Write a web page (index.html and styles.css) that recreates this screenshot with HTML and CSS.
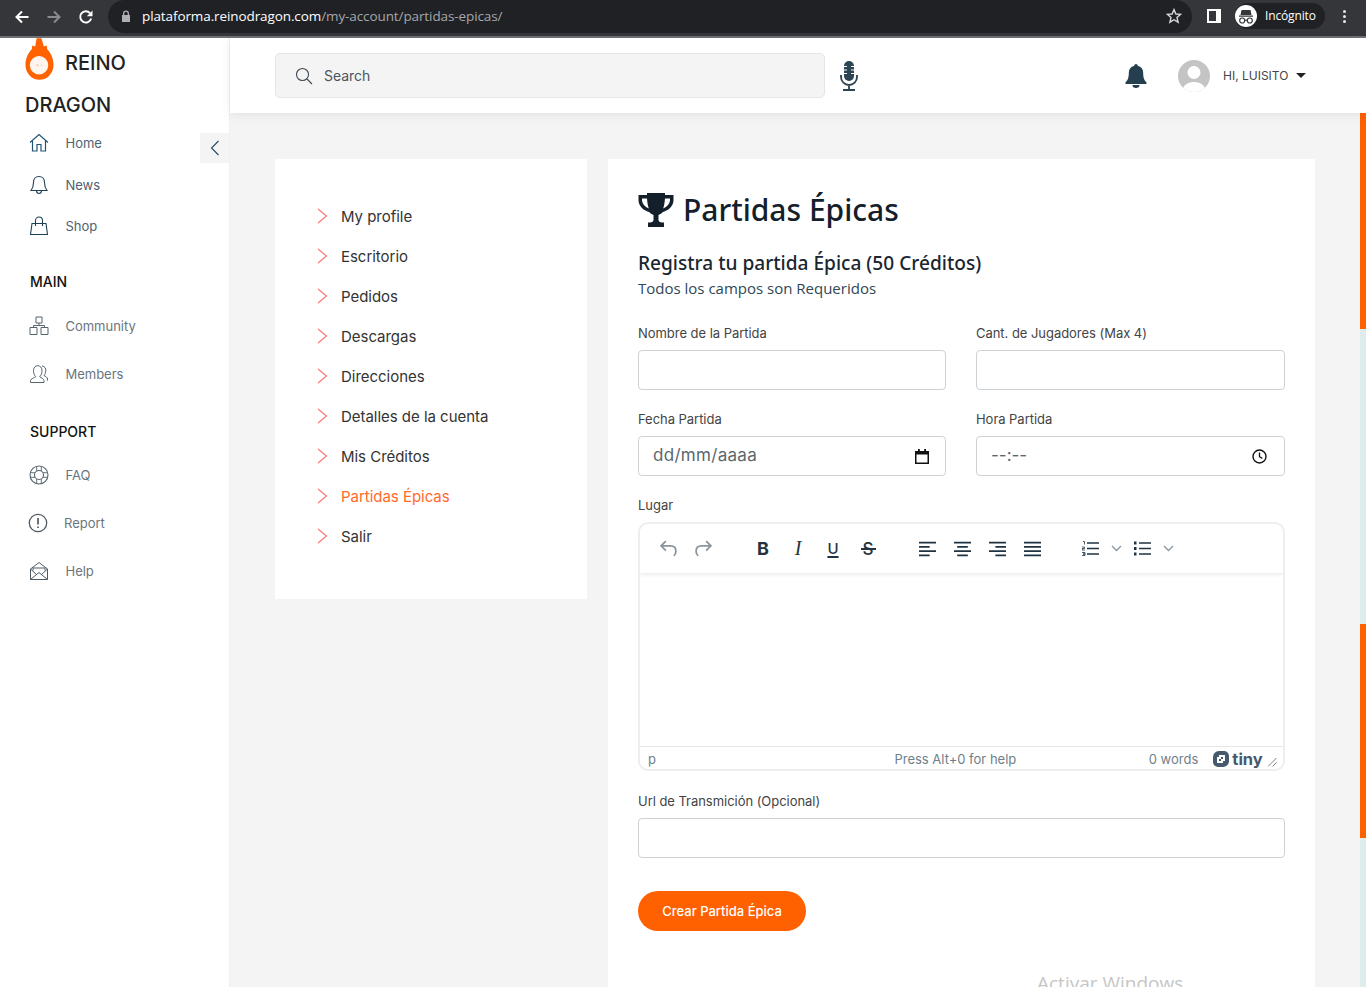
FILE: index.html
```html
<!DOCTYPE html>
<html lang="es">
<head>
    <meta charset="UTF-8">
    <meta name="viewport" content="width=device-width, initial-scale=1.0">
    <title>Partidas Épicas</title>
    <link rel="stylesheet" href="styles.css">
</head>
<body>
    <!-- browser chrome -->
    <div class="browser-bar">
        <div class="nav-buttons">
            <svg class="chrome-icon" viewBox="0 0 16 16"><path d="M14.5 8H2.500M8 2.500 2.500 8 8 13.500" fill="none" stroke="#fff" stroke-width="2"/></svg>
            <svg class="chrome-icon" viewBox="0 0 16 16"><path d="M1.500 8h12M8 2.500 13.500 8 8 13.500" fill="none" stroke="#8a8b8e" stroke-width="2"/></svg>
            <svg class="chrome-icon" viewBox="0 0 16 16"><path d="M13.200 9.500A5.600 5.600 0 1 1 12 4.100" fill="none" stroke="#fff" stroke-width="1.900"/><path d="M14.500 1.500v5.700H8.800z" fill="#fff"/></svg>
        </div>
        <div class="omnibox">
            <svg class="lock-icon" viewBox="0 0 10 12"><path d="M2 5V3.400a3 3 0 0 1 6 0V5h1v7H1V5zm1.300 0h3.400V3.400a1.700 1.700 0 0 0-3.400 0z" fill="#aeb0b4"/></svg>
            <span class="url"><span class="url-host">plataforma.reinodragon.com</span>/my-account/partidas-epicas/</span>
            <svg class="star-icon" viewBox="0 0 16 16"><path d="M8 1.600 9.900 6l4.700.4-3.600 3.100 1.100 4.700L8 11.700l-4.100 2.500L5 9.500 1.400 6.400 6.100 6z" fill="none" stroke="#d6d7d9" stroke-width="1.400"/></svg>
        </div>
        <svg class="panel-icon" viewBox="0 0 14 14"><path d="M0 0h14v14H0zM9 2H2v10h7z" fill="#fff" fill-rule="evenodd"/></svg>
        <div class="incognito">
            <span class="incognito-badge">
                <svg viewBox="0 0 22 22"><path d="M4 10.500h14v1.200H4zM6.500 5h9l1 5h-11z" fill="#35363a"/><circle cx="7.200" cy="15.500" r="2.500" fill="none" stroke="#35363a" stroke-width="1.200"/><circle cx="14.800" cy="15.500" r="2.500" fill="none" stroke="#35363a" stroke-width="1.200"/><path d="M9.700 15.200h2.600" stroke="#35363a" stroke-width="1.200"/></svg>
            </span>
            Incógnito
        </div>
        <div class="kebab"><i></i><i></i><i></i></div>
    </div>

    <div class="shell">
        <aside class="sidebar">
            <div class="logo-row">
                <svg class="flame" viewBox="0 0 30 44">
                    <path d="M12 0h5l2.500 8.500 3-1 .5 4c4 4 6.500 10 6.500 16a14.500 15.500 0 0 1-29 0c0-6 2.500-12 6.500-16l.5-4 3 1z" fill="#ff6200"/>
                    <circle cx="14.500" cy="28" r="9.500" fill="#fff6f0"/>
                    <circle cx="13" cy="28" r="1.100" fill="#ffc2a0"/>
                    <circle cx="17" cy="28" r=".8" fill="#ffc2a0"/>
                </svg>
                <span>REINO</span>
            </div>
            <div class="logo-second">DRAGON</div>

            <ul class="nav-list nav-top">
                <li class="nav-item">
                    <svg class="nav-icon" viewBox="0 0 20 20"><path d="M1 9.500 10 1.500l9 8M3.500 8v10h4.500v-6.500h4V18h4.500V8" fill="none" stroke="#1f5472" stroke-width="1.200"/></svg>
                    Home
                </li>
                <li class="nav-item">
                    <svg class="nav-icon" viewBox="0 0 20 20"><path d="M10 1.500c-3.500 0-5.500 2.500-5.500 6 0 4-.8 5.800-2.500 8h16c-1.700-2.200-2.500-4-2.500-8 0-3.500-2-6-5.500-6zM7.500 15.500c0 4 5 4 5 0" fill="none" stroke="#1f4258" stroke-width="1.100"/></svg>
                    News
                </li>
                <li class="nav-item">
                    <svg class="nav-icon" viewBox="0 0 20 20"><path d="M1.500 18.500 3 7.500h14l1.500 11zM6.500 10V4.500a3.500 3.500 0 0 1 7 0V10" fill="none" stroke="#1f4258" stroke-width="1.100"/></svg>
                    Shop
                </li>
            </ul>

            <div class="nav-title nav-title-main">MAIN</div>
            <ul class="nav-list nav-main">
                <li class="nav-item">
                    <svg class="nav-icon" viewBox="0 0 20 20"><path d="M7 1h6v6H7zM1 11.500h7v7H1zM12 11.500h7v7h-7zM10 7v2.500H4.500v2M10 9.500h5.500v2" fill="none" stroke="#56646e" stroke-width="1"/></svg>
                    Community
                </li>
                <li class="nav-item">
                    <svg class="nav-icon" viewBox="0 0 20 20"><path d="M1.500 18.500v-1.800c0-2 3.800-2.800 5.300-4-1.800-1.800-2.300-3.800-2.300-6 0-3 1.700-5 4.200-5s4.300 2 4.300 5c0 2.200-.5 4.200-2.300 6 1.500 1.200 4.300 2 4.300 4v1.800zM13 2c3 .3 4 2.500 3.800 5-.2 2-.8 3.300-1.800 4.500 1.500 1 3.500 1.700 3.500 3.500v1.500" fill="none" stroke="#56646e" stroke-width="1"/></svg>
                    Members
                </li>
            </ul>

            <div class="nav-title nav-title-support">SUPPORT</div>
            <ul class="nav-list nav-support">
                <li class="nav-item">
                    <svg class="nav-icon" viewBox="0 0 20 20"><circle cx="10" cy="10" r="9" fill="none" stroke="#56646e" stroke-width="1.100"/><circle cx="10" cy="10" r="4.500" fill="none" stroke="#56646e" stroke-width="1.100"/><path d="M7.700 1.300v4.800M12.300 1.300v4.800M7.700 13.900v4.800M12.300 13.900v4.800M1.300 7.700h4.800M1.300 12.300h4.800M13.900 7.700h4.800M13.900 12.300h4.800" fill="none" stroke="#56646e" stroke-width=".9"/></svg>
                    FAQ
                </li>
                <li class="nav-item nav-item-report">
                    <svg class="nav-icon" viewBox="0 0 20 20"><circle cx="10" cy="10" r="8.700" fill="none" stroke="#4f5c66" stroke-width="1.300"/><path d="M10 5v6.500M10 13.500V15" stroke="#4f5c66" stroke-width="1.700"/></svg>
                    Report
                </li>
                <li class="nav-item">
                    <svg class="nav-icon" viewBox="0 0 20 20"><path d="M1.500 8 10 1.500 18.500 8v10.500h-17zM1.500 8l6 5.500M18.500 8l-6 5.500M1.500 18.500 10 11.500l8.500 7M4 9.500V7h12v2.500" fill="none" stroke="#4f5c66" stroke-width="1"/></svg>
                    Help
                </li>
            </ul>

            <button class="collapse-btn" type="button">
                <svg viewBox="0 0 10 16"><path d="M8.500 1 1.500 8l7 7" fill="none" stroke="#234a63" stroke-width="1.100"/></svg>
            </button>
        </aside>

        <div class="main">
            <header class="topbar">
                <div class="search">
                    <svg class="search-icon" viewBox="0 0 18 18"><circle cx="7.500" cy="7.500" r="6" fill="none" stroke="#3f4a55" stroke-width="1.100"/><path d="m12 12 5 5" stroke="#3f4a55" stroke-width="1.100"/></svg>
                    Search
                </div>
                <svg class="mic-icon" viewBox="0 0 18 30"><rect x="4" y="0" width="10" height="20" rx="5" fill="#2c4454"/><path d="M3.500 5.500h3.500M11 5.500h3.500M3.500 9h3.500M11 9h3.500M3.500 12.500h3.500M11 12.500h3.500" stroke="#fff" stroke-width="1.100"/><path d="M1 14v2a8 8 0 0 0 16 0v-2M9 24v4M3 29h12" fill="none" stroke="#2c4454" stroke-width="1.800"/></svg>
                <svg class="bell-icon" viewBox="0 0 22 24"><path d="M11 0c1 0 1.700.7 1.700 1.800 3.600.8 5.500 3.500 5.500 7.200 0 5 1 7 3.300 9.500v1.500H.5v-1.500C2.800 16 3.800 14 3.800 9c0-3.700 1.900-6.400 5.500-7.200C9.300.7 10 0 11 0zM7.500 21h7a3.500 3 0 0 1-7 0z" fill="#263f50"/></svg>
                <div class="user">
                    <span class="avatar">
                        <svg viewBox="0 0 32 32"><circle cx="16" cy="12.500" r="6.500" fill="#fff"/><path d="M4 32c1-8 7-10 12-10s11 2 12 10z" fill="#fff"/></svg>
                    </span>
                    <span>HI, LUISITO</span>
                    <span class="caret"></span>
                </div>
            </header>

            <div class="page-body">
                <div class="content">
                    <ul class="account-menu">
                        <li><svg viewBox="0 0 11 16"><path d="m1 1 8.500 7L1 15" fill="none" stroke="#f77" stroke-width="1.200"/></svg>My profile</li>
                        <li><svg viewBox="0 0 11 16"><path d="m1 1 8.500 7L1 15" fill="none" stroke="#f77" stroke-width="1.200"/></svg>Escritorio</li>
                        <li><svg viewBox="0 0 11 16"><path d="m1 1 8.500 7L1 15" fill="none" stroke="#f77" stroke-width="1.200"/></svg>Pedidos</li>
                        <li><svg viewBox="0 0 11 16"><path d="m1 1 8.500 7L1 15" fill="none" stroke="#f77" stroke-width="1.200"/></svg>Descargas</li>
                        <li><svg viewBox="0 0 11 16"><path d="m1 1 8.500 7L1 15" fill="none" stroke="#f77" stroke-width="1.200"/></svg>Direcciones</li>
                        <li><svg viewBox="0 0 11 16"><path d="m1 1 8.500 7L1 15" fill="none" stroke="#f77" stroke-width="1.200"/></svg>Detalles de la cuenta</li>
                        <li><svg viewBox="0 0 11 16"><path d="m1 1 8.500 7L1 15" fill="none" stroke="#f77" stroke-width="1.200"/></svg>Mis Créditos</li>
                        <li class="active"><svg viewBox="0 0 11 16"><path d="m1 1 8.500 7L1 15" fill="none" stroke="#f77" stroke-width="1.200"/></svg>Partidas Épicas</li>
                        <li><svg viewBox="0 0 11 16"><path d="m1 1 8.500 7L1 15" fill="none" stroke="#f77" stroke-width="1.200"/></svg>Salir</li>
                    </ul>

                    <section class="card">
                        <h1 class="page-title">
                            <svg viewBox="0 0 36 34"><path d="M9 0h18v2h8.500v5c0 6-5 10.500-10.500 12-1.500 1.500-3.500 2.500-4.500 3v5c0 1.500 1.500 2.500 3.500 2.500h2V34H10v-4.500h2c2 0 3.500-1 3.500-2.500v-5c-1-.5-3-1.500-4.500-3C5.500 17.500.5 13 .5 7V2H9zM4 5.500V7c0 3.500 3 7 6.800 8.500C9.800 12.500 9.200 9 9 5.500zm28 0h-5c-.2 3.500-.8 7-1.800 10C29 14 32 10.500 32 7z" fill="#13202b" fill-rule="evenodd"/></svg>
                            Partidas Épicas
                        </h1>
                        <h2 class="subtitle">Registra tu partida Épica (50 Créditos)</h2>
                        <p class="required">Todos los campos son Requeridos</p>

                        <form class="match-form">
                            <div class="form-row">
                                <div class="form-group">
                                    <label for="nombre">Nombre de la Partida</label>
                                    <input type="text" id="nombre">
                                </div>
                                <div class="form-group">
                                    <label for="jugadores">Cant. de Jugadores (Max 4)</label>
                                    <input type="text" id="jugadores">
                                </div>
                            </div>
                            <div class="form-row">
                                <div class="form-group">
                                    <label>Fecha Partida</label>
                                    <div class="fake-input fake-date">
                                        dd/mm/aaaa
                                        <svg viewBox="0 0 14 15"><path d="M3 0h1.800v2h4.400V0H11v2h3v13H0V2h3zM1.500 5.500v8h11v-8z" fill="#111" fill-rule="evenodd"/></svg>
                                    </div>
                                </div>
                                <div class="form-group">
                                    <label>Hora Partida</label>
                                    <div class="fake-input fake-time">
                                        --:--
                                        <svg viewBox="0 0 15 15"><circle cx="7.500" cy="7.500" r="6.500" fill="none" stroke="#111" stroke-width="1.400"/><path d="M7.500 3.500v4.200l2.800 1.700" fill="none" stroke="#111" stroke-width="1.300"/></svg>
                                    </div>
                                </div>
                            </div>

                            <div class="form-group">
                                <label>Lugar</label>
                                <div class="editor">
                                    <div class="editor-toolbar">
                                        <div class="tool-group">
                                            <span class="tool tool-history"><svg viewBox="0 0 18 18"><path d="M6.500 2 2 6.500 6.500 11M2.500 6.500H11c3 0 5 2 5 5 0 2-.8 3.500-2 4.500" fill="none" stroke="#8b959d" stroke-width="1.700"/></svg></span>
                                            <span class="tool tool-history"><svg viewBox="0 0 18 18"><path d="M11.500 2 16 6.500 11.500 11M15.500 6.500H7c-3 0-5 2-5 5 0 2 .8 3.500 2 4.500" fill="none" stroke="#8b959d" stroke-width="1.700"/></svg></span>
                                        </div>
                                        <div class="tool-group">
                                            <span class="tool tool-bold">B</span>
                                            <span class="tool tool-italic">I</span>
                                            <span class="tool tool-under">U</span>
                                            <span class="tool tool-strike">S</span>
                                        </div>
                                        <div class="tool-group">
                                            <span class="tool"><svg viewBox="0 0 16 14"><path d="M0 1h16M0 5h10M0 9h16M0 13h10" stroke="#1f3342" stroke-width="1.700"/></svg></span>
                                            <span class="tool"><svg viewBox="0 0 16 14"><path d="M0 1h16M3 5h10M0 9h16M3 13h10" stroke="#1f3342" stroke-width="1.700"/></svg></span>
                                            <span class="tool"><svg viewBox="0 0 16 14"><path d="M0 1h16M6 5h10M0 9h16M6 13h10" stroke="#1f3342" stroke-width="1.700"/></svg></span>
                                            <span class="tool"><svg viewBox="0 0 16 14"><path d="M0 1h16M0 5h16M0 9h16M0 13h16" stroke="#1f3342" stroke-width="1.700"/></svg></span>
                                        </div>
                                        <div class="tool-group tool-group-lists">
                                            <span class="tool-small"><svg viewBox="0 0 17 15"><path d="M5 2h12M5 7.500h12M5 13h12" stroke="#1f3342" stroke-width="1.700"/><path d="M1 .5h1.500v3M0 6h2.500v1.500H0V9h3M0 11.500h3V13H1h2v1.500H0" fill="none" stroke="#1f3342" stroke-width=".8"/></svg></span>
                                            <span class="tool-small"><svg class="chev" viewBox="0 0 11 7"><path d="m1 1 4.500 4.500L10 1" fill="none" stroke="#8b959d" stroke-width="1.300"/></svg></span>
                                            <span class="tool-small"><svg viewBox="0 0 17 15"><path d="M5 2h12M5 7.500h12M5 13h12" stroke="#1f3342" stroke-width="1.700"/><path d="M0 .5h2.500v3H0zM0 6h2.500v3H0zM0 11.500h2.500v3H0z" fill="#1f3342"/></svg></span>
                                            <span class="tool-small"><svg class="chev" viewBox="0 0 11 7"><path d="m1 1 4.500 4.500L10 1" fill="none" stroke="#8b959d" stroke-width="1.300"/></svg></span>
                                        </div>
                                    </div>
                                    <div class="editor-body"></div>
                                    <div class="editor-status">
                                        <span class="status-path">p</span>
                                        <span class="status-help">Press Alt+0 for help</span>
                                        <span class="status-words">0 words</span>
                                        <span class="tiny-logo">
                                            <svg viewBox="0 0 16 16"><path d="M6 0h5a5 5 0 0 1 5 5v5a6 6 0 0 1-6 6H5a5 5 0 0 1-5-5V6a6 6 0 0 1 6-6zm0 4v2H4v6h6v-2h2V4zm2 2h2v2H8v2H6V8h2z" fill="#455a6c" fill-rule="evenodd"/></svg>
                                            tiny
                                        </span>
                                        <svg class="resize-grip" viewBox="0 0 9 9"><path d="M0 8.500 8.500 0M4.500 8.500l4-4" stroke="#7d858b" stroke-width="1"/></svg>
                                    </div>
                                </div>
                            </div>

                            <div class="form-group form-group-url">
                                <label for="url">Url de Transmición (Opcional)</label>
                                <input type="text" id="url">
                            </div>

                            <button class="submit-btn" type="button">Crear Partida Épica</button>
                        </form>

                        <div class="watermark">Activar Windows</div>
                    </section>
                </div>

                <div class="rail">
                    <span class="rail-on rail-a"></span>
                    <span class="rail-off rail-b"></span>
                    <span class="rail-on rail-c"></span>
                    <span class="rail-off rail-d"></span>
                </div>
            </div>
        </div>
    </div>
</body>
</html>
```

FILE: styles.css
```css
* {
    box-sizing: border-box;
}

body {
    font-family: Inter, "Liberation Sans", sans-serif;
    background-color: #fff;
    color: #333;
    margin: 0;
    height: 100vh;
    overflow: hidden;
    display: flex;
    flex-direction: column;
}

ul {
    list-style: none;
    margin: 0;
    padding: 0;
}

svg {
    display: block;
    flex: none;
}

/* browser bar */
.browser-bar {
    height: 38px;
    flex: none;
    background-color: #35363a;
    border-bottom: 2px solid #6f7073;
    display: flex;
    align-items: flex-start;
    color: #fff;
}

.nav-buttons {
    display: flex;
    width: 108px;
    padding: 9px 0 0 14px;
    gap: 16px;
}

.chrome-icon {
    width: 16px;
    height: 16px;
}

.omnibox {
    width: 1084px;
    height: 33px;
    background-color: #202124;
    border-radius: 0 17px 17px 17px;
    border-top-left-radius: 17px;
    display: flex;
    align-items: center;
    padding: 0 10px 1px 13px;
}

.lock-icon {
    width: 10px;
    height: 12px;
}

.url {
    font-family: "Open Sans", sans-serif;
    font-size: 13.5px;
    letter-spacing: -0.1px;
    color: #a5a7aa;
    margin-left: 11px;
    flex: 1;
}

.url-host {
    color: #fff;
}

.star-icon {
    width: 16px;
    height: 16px;
}

.panel-icon {
    width: 14px;
    height: 14px;
    margin: 9px 14px 0 15px;
}

.incognito {
    display: flex;
    align-items: center;
    width: 90px;
    height: 26px;
    margin-top: 3px;
    padding-bottom: 1px;
    border-radius: 13px;
    background-color: #202124;
    font-family: "Open Sans", sans-serif;
    font-size: 12px;
    letter-spacing: -0.15px;
    gap: 8px;
}

.incognito-badge {
    width: 22px;
    height: 22px;
    border-radius: 50%;
    background-color: #fff;
}

.kebab {
    display: flex;
    flex-direction: column;
    gap: 2px;
    margin: 10px 0 0 18px;
}

.kebab i {
    width: 3px;
    height: 3px;
    border-radius: 50%;
    background-color: #e8e8e8;
}

/* layout */
.shell {
    flex: 1;
    min-height: 0;
    display: flex;
}

.sidebar {
    width: 230px;
    flex: none;
    position: relative;
    border-right: 1px solid #f0f0f0;
    padding-left: 25px;
}

.logo-row {
    height: 50px;
    display: flex;
    align-items: center;
    gap: 11px;
    font-size: 20px;
    font-weight: 500;
    color: #222;
}

.flame {
    width: 29px;
    height: 43px;
    margin-bottom: 7px;
}

.logo-second {
    height: 34px;
    line-height: 34px;
    font-size: 20px;
    font-weight: 500;
    color: #222;
}

.nav-item {
    display: flex;
    align-items: center;
    gap: 16.5px;
    padding-left: 4px;
    font-size: 13px;
    letter-spacing: -0.02px;
    color: #6a757e;
}

.nav-top .nav-item {
    height: 42px;
    color: #4f6272;
}

.nav-top .nav-item:last-child {
    height: 41px;
    padding-bottom: 1px;
}

.nav-main .nav-item,
.nav-support .nav-item {
    height: 48px;
}

.nav-main {
    margin-top: 10px;
}

.nav-support {
    margin-top: 9px;
}

.nav-icon {
    width: 20px;
    height: 20px;
}

.nav-item-report {
    padding-left: 3px;
    gap: 16px;
}

.nav-title {
    font-size: 14px;
    font-weight: 500;
    line-height: 20px;
    color: #111;
    padding-left: 5px;
}

.nav-title-main {
    margin-top: 25px;
}

.nav-title-support {
    margin-top: 24px;
}

.collapse-btn {
    position: absolute;
    top: 95px;
    right: 0;
    width: 29px;
    height: 30px;
    border: none;
    padding: 0;
    background-color: #f4f4f4;
    display: flex;
    align-items: center;
    justify-content: center;
}

.collapse-btn svg {
    width: 10px;
    height: 16px;
}

.main {
    flex: 1;
    min-width: 0;
    display: flex;
    flex-direction: column;
    background-color: #f4f4f4;
}

/* top bar */
.topbar {
    height: 75px;
    flex: none;
    background-color: #fff;
    box-shadow: 0 2px 10px rgba(0, 0, 0, 0.08);
    display: flex;
    align-items: center;
    padding-left: 45px;
    position: relative;
}

.search {
    width: 550px;
    height: 45px;
    background-color: #f4f4f4;
    border: 1px solid #e6e6e6;
    border-radius: 5px;
    display: flex;
    align-items: center;
    padding-left: 19px;
    gap: 11px;
    font-size: 14px;
    letter-spacing: -0.03px;
    color: #4a5560;
}

.search-icon {
    width: 18px;
    height: 18px;
}

.mic-icon {
    width: 18px;
    height: 30px;
    margin-left: 15px;
}

.bell-icon {
    width: 22px;
    height: 24px;
    margin-left: 267px;
}

.user {
    display: flex;
    align-items: center;
    margin-left: 31px;
    font-size: 12px;
    color: #444;
}

.avatar {
    width: 32px;
    height: 32px;
    border-radius: 50%;
    background-color: #c4c4c4;
    overflow: hidden;
    margin-right: 13px;
}

.caret {
    width: 0;
    height: 0;
    border-left: 5px solid transparent;
    border-right: 5px solid transparent;
    border-top: 5px solid #222;
    margin-left: 8px;
}

/* page */
.page-body {
    flex: 1;
    min-height: 0;
    display: flex;
}

.content {
    flex: 1;
    min-width: 0;
    display: flex;
    align-items: stretch;
    gap: 21px;
    padding: 46px 45px 0;
}

.account-menu {
    width: 312px;
    height: 440px;
    flex: none;
    background-color: #fff;
    padding: 37px 0 0 42px;
}

.account-menu li {
    height: 40px;
    display: flex;
    align-items: center;
    gap: 13px;
    font-size: 15px;
    letter-spacing: -0.03px;
    color: #333;
}

.account-menu li svg {
    width: 11px;
    height: 16px;
}

.account-menu .active {
    color: #ff6a2b;
}

.card {
    flex: 1;
    min-width: 0;
    background-color: #fff;
    padding: 31px 30px 0;
    position: relative;
}

.page-title {
    display: flex;
    align-items: center;
    gap: 9px;
    margin: 0;
    height: 40px;
    font-family: "Noto Sans", "Open Sans", sans-serif;
    font-size: 30px;
    font-weight: 500;
    line-height: 38px;
    color: #13202b;
}

.page-title svg {
    width: 36px;
    height: 34px;
}

.subtitle {
    margin: 19px 0 0;
    font-family: "Noto Sans", "Open Sans", sans-serif;
    font-size: 19.1px;
    font-weight: 500;
    line-height: 28px;
    color: #1a2630;
}

.required {
    margin: 0;
    font-family: "Open Sans", sans-serif;
    font-size: 15px;
    line-height: 22px;
    height: 24px;
    color: #2f4756;
}

.match-form {
    margin-top: 23px;
}

.form-row {
    display: grid;
    grid-template-columns: 308px 309px;
    gap: 30px;
}

.form-group {
    margin-bottom: 20px;
}

.form-group-url {
    margin-top: 21px;
    margin-bottom: 33px;
}

label {
    display: block;
    font-size: 13px;
    letter-spacing: -0.04px;
    line-height: 18px;
    color: #444;
    margin-bottom: 8px;
}

input,
.fake-input {
    display: block;
    width: 100%;
    height: 40px;
    border: 1px solid #ccd2d6;
    border-radius: 4px;
    background-color: #fff;
}

.fake-input {
    display: flex;
    align-items: center;
    justify-content: space-between;
    color: #5b6770;
}

.fake-date {
    font-size: 17px;
    letter-spacing: 0.3px;
    padding: 0 15px 3px 14px;
}

.fake-date svg {
    width: 14px;
    height: 15px;
    margin-right: 1px;
    margin-top: 3px;
}

.fake-time {
    font-size: 17px;
    padding: 0 17px 2px 14px;
}

.fake-time svg {
    width: 15px;
    height: 15px;
    margin-top: 2px;
}

/* editor */
.editor {
    height: 249px;
    border: 2px solid #eee;
    border-radius: 10px;
    display: flex;
    flex-direction: column;
    overflow: hidden;
}

.editor-toolbar {
    height: 49px;
    flex: none;
    display: flex;
    align-items: center;
    padding-left: 11px;
    gap: 24.5px;
    box-shadow: 0 2px 4px rgba(0, 0, 0, 0.08);
}

.tool-group {
    display: flex;
}

.tool-group-lists {
    margin-left: 3px;
}

.tool {
    width: 35px;
    height: 20px;
    display: flex;
    align-items: center;
    justify-content: center;
    color: #1f3342;
}

.tool svg {
    width: 17px;
    height: 16px;
}

.tool-history svg {
    width: 19px;
    height: 19px;
}

.tool-small {
    width: 26px;
    height: 20px;
    display: flex;
    align-items: center;
    justify-content: center;
}

.tool-small svg {
    width: 17px;
    height: 15px;
}

.tool-small .chev {
    width: 11px;
    height: 7px;
}

.tool-bold {
    font-size: 18px;
    font-weight: 700;
}

.tool-italic {
    font-family: "Liberation Serif", serif;
    font-size: 20px;
    font-style: italic;
}

.tool-under {
    font-size: 15px;
    font-weight: 500;
    text-decoration: underline;
    text-underline-offset: 2px;
    text-decoration-thickness: 2px;
}

.tool-strike {
    font-size: 17px;
    font-weight: 500;
    position: relative;
}

.tool-strike::after {
    content: "";
    position: absolute;
    left: 10px;
    top: 9px;
    width: 15px;
    height: 2px;
    background-color: #1f3342;
}

.editor-body {
    flex: 1;
}

.editor-status {
    height: 23px;
    flex: none;
    border-top: 1px solid #e4e6e8;
    display: flex;
    align-items: center;
    padding: 2px 6px 0 8px;
    font-size: 13px;
    color: #6f7f8a;
}

.status-path {
    width: 248px;
}

.status-help {
    width: 256px;
}

.status-words {
    width: 65px;
}

.tiny-logo {
    display: flex;
    align-items: center;
    gap: 3px;
    font-size: 16.5px;
    font-weight: 700;
    line-height: 1;
    color: #455a6c;
    width: 55px;
}

.tiny-logo svg {
    width: 16px;
    height: 16px;
}

.resize-grip {
    width: 9px;
    height: 9px;
    margin-top: 7px;
}

.submit-btn {
    display: block;
    width: 168px;
    height: 40px;
    border: none;
    border-radius: 20px;
    background-color: #ff6000;
    color: #fff;
    font-family: Inter, sans-serif;
    font-size: 13px;
    font-weight: 500;
}

.watermark {
    position: absolute;
    left: 429px;
    bottom: -8px;
    font-family: "Open Sans", sans-serif;
    font-size: 19px;
    line-height: 24px;
    color: #c6c6c6;
}

/* side rail */
.rail {
    width: 6px;
    flex: none;
    display: flex;
    flex-direction: column;
}

.rail-on {
    background-color: #ff6000;
}

.rail-off {
    background-color: #deeced;
}

.rail-a {
    height: 216px;
}

.rail-b {
    height: 295px;
}

.rail-c {
    height: 214px;
}

.rail-d {
    flex: 1;
}
```
